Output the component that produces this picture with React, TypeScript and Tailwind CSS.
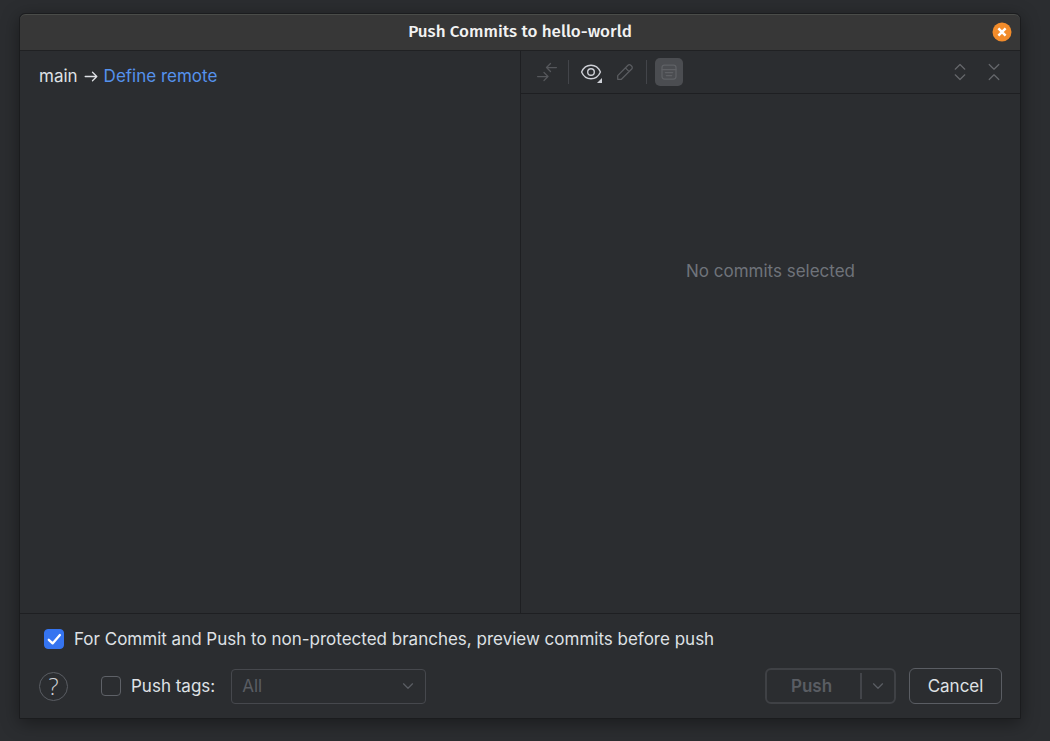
import { useState } from "react";

const iconButton = "flex h-7 w-7 items-center justify-center rounded";

function CompareIcon() {
  return (
    <svg width="20" height="20" viewBox="0 0 20 20" fill="none" stroke="#55575b" strokeWidth="1.25" strokeLinecap="round" strokeLinejoin="round" aria-hidden="true">
      <path d="M19.400 5.500H9.500M13.500 1.500l-4 4 4 4M0.600 14.500H11M7 10.500l4 4-4 4" />
    </svg>
  );
}

function EyeIcon() {
  return (
    <svg width="24" height="24" viewBox="0 0 24 24" fill="none" aria-hidden="true">
      <path d="M2.600 12C4.300 8 7.800 5.200 12 5.200s7.700 2.800 9.400 6.800c-1.700 4-5.200 6.800-9.400 6.800S4.300 16 2.600 12z" stroke="#ced0d6" strokeWidth="1.400" />
      <circle cx="12" cy="12" r="3.300" stroke="#ced0d6" strokeWidth="1.400" />
      <path d="M23 18v5h-5z" fill="#ced0d6" />
    </svg>
  );
}

function PencilIcon() {
  return (
    <svg width="20" height="20" viewBox="0 0 20 20" fill="none" stroke="#5a5c60" strokeWidth="1.25" strokeLinejoin="round" aria-hidden="true">
      <path d="M2.700 13.600L13 3.300a1.900 1.900 0 0 1 2.700 0l1 1a1.900 1.900 0 0 1 0 2.700L6.400 17.300H2.700zM10.400 5.900l3.700 3.700" />
    </svg>
  );
}

function PreviewIcon() {
  return (
    <svg width="20" height="20" viewBox="0 0 20 20" fill="none" stroke="#5f6165" strokeWidth="1.25" strokeLinecap="round" aria-hidden="true">
      <rect x="3" y="3" width="14" height="14" rx="2.500" />
      <path d="M3 7.500h14M6.300 10.600h7.400M7.300 13.600h5.400" />
    </svg>
  );
}

function ChevronDown() {
  return (
    <svg width="12" height="12" viewBox="0 0 12 12" fill="none" stroke="#5a5d63" strokeWidth="1.250" strokeLinecap="round" strokeLinejoin="round" aria-hidden="true">
      <path d="M1.500 3.800L6 8.300l4.500-4.500" />
    </svg>
  );
}

function Toolbar() {
  return (
    <div className="flex h-[43px] items-center border-b border-[#1e1f22] px-3">
      <button type="button" disabled aria-label="Show diff" className={iconButton}>
        <CompareIcon />
      </button>
      <div className="mr-2 ml-[7px] h-6 w-px bg-[#43454a]" />
      <button type="button" aria-label="View options" className={iconButton}>
        <EyeIcon />
      </button>
      <button type="button" disabled aria-label="Edit source" className="ml-1.5 flex h-7 w-7 items-center justify-center rounded">
        <PencilIcon />
      </button>
      <div className="mr-2 ml-[7px] h-6 w-px bg-[#43454a]" />
      <button type="button" disabled aria-label="Show details" className="flex h-7 w-7 items-center justify-center rounded-[5px] bg-[#4b4d51]">
        <PreviewIcon />
      </button>
      <div className="ml-auto flex gap-1.5">
        <button type="button" disabled aria-label="Expand all" className={iconButton}>
          <svg width="20" height="20" viewBox="0 0 20 20" fill="none" stroke="#66686c" strokeWidth="1.2" strokeLinecap="round" strokeLinejoin="round" aria-hidden="true">
            <path d="M5.200 7.200L10 2.500l4.800 4.700M5.200 12.800L10 17.500l4.800-4.700" />
          </svg>
        </button>
        <button type="button" disabled aria-label="Collapse all" className={iconButton}>
          <svg width="20" height="20" viewBox="0 0 20 20" fill="none" stroke="#66686c" strokeWidth="1.2" strokeLinecap="round" strokeLinejoin="round" aria-hidden="true">
            <path d="M5.200 2.500L10 7.200l4.800-4.700M5.200 17.500L10 12.800l4.800 4.700" />
          </svg>
        </button>
      </div>
    </div>
  );
}

function Checkbox({ id, checked, onChange }: { id: string; checked: boolean; onChange: (value: boolean) => void }) {
  return (
    <span className="grid h-5 w-5 shrink-0 place-items-center">
      <input
        id={id}
        type="checkbox"
        checked={checked}
        onChange={(e) => onChange(e.target.checked)}
        className="col-start-1 row-start-1 h-5 w-5 appearance-none rounded border border-[#5e6167] checked:border-[#3574f0] checked:bg-[#3574f0]"
      />
      {checked && (
        <svg width="20" height="20" viewBox="0 0 20 20" fill="none" className="pointer-events-none col-start-1 row-start-1" aria-hidden="true">
          <path d="M4.800 10.800l3.800 3.600 7.300-8.400" stroke="#fff" strokeWidth="2.300" strokeLinecap="round" strokeLinejoin="round" />
        </svg>
      )}
    </span>
  );
}

export default function App() {
  const [preview, setPreview] = useState(true);
  const [tags, setTags] = useState(false);

  return (
    <div className="flex min-h-screen bg-[#2b2d30] pt-[13px] pr-[29px] pb-[22px] pl-[19px] font-['Inter','Liberation_Sans',sans-serif] text-[17px] leading-5 text-[#dfe1e5]">
      <div className="flex flex-1 flex-col rounded-t-md border border-[#1b1c1e] bg-[#2b2d30] shadow-[0_4px_18px_rgba(0,0,0,0.4)]">
        <header className="grid h-[37px] grid-cols-[1fr_auto_1fr] items-center rounded-t-md border-t border-b border-t-[#4a4c49] border-b-[#202123] bg-[#373737] px-2 pb-px">
          <h1 className="col-start-2 font-['Fira_Sans','Open_Sans',sans-serif] text-[17px] leading-[22px] font-medium text-[#f2f2f2]">Push Commits to hello-world</h1>
          <button type="button" aria-label="Close" className="flex h-5 w-5 items-center justify-center justify-self-end">
            <svg width="20" height="20" viewBox="0 0 20 20" aria-hidden="true">
              <circle cx="10" cy="10" r="9.500" fill="#f28c2b" />
              <path d="M6.400 6.400l7.200 7.200M13.600 6.400l-7.200 7.200" stroke="#fff" strokeWidth="2.500" />
            </svg>
          </button>
        </header>

        <main className="grid flex-1 grid-cols-2">
          <section className="px-[19px] pt-[15px]">
            <p className="flex items-center gap-1.5">
              <span>main</span>
              <svg width="14" height="14" viewBox="0 0 14 14" fill="none" stroke="#dfe1e5" strokeWidth="1.300" strokeLinecap="round" strokeLinejoin="round" aria-hidden="true">
                <path d="M1.200 7.500H12.800M8.500 3.200l4.300 4.300-4.300 4.300" />
              </svg>
              <a href="#remote" className="text-[#5592ed]">Define remote</a>
            </p>
          </section>
          <section className="flex flex-col border-l border-[#1e1f22]">
            <Toolbar />
            <p className="mt-[167px] text-center text-[#6f737a]">No commits selected</p>
          </section>
        </main>

        <footer className="flex flex-col gap-[19px] border-t border-[#1e1f22] pt-[15px] pr-[18px] pb-3.5 pl-[19px]">
          <div className="flex items-center gap-2.5 pl-[5px]">
            <Checkbox id="preview" checked={preview} onChange={setPreview} />
            <label htmlFor="preview">For Commit and Push to non-protected branches, preview commits before push</label>
          </div>
          <div className="flex items-center">
            <button type="button" aria-label="Help" className="flex h-[29px] w-[29px] items-center justify-center rounded-full border border-[#5a5d63] font-['Open_Sans',sans-serif] text-2xl leading-5 font-light text-[#ced0d6]">
              ?
            </button>
            <div className="ml-[33px] flex items-center gap-2.5">
              <Checkbox id="tags" checked={tags} onChange={setTags} />
              <label htmlFor="tags">Push tags:</label>
            </div>
            <div className="ml-4 grid w-[195px] items-center">
              <select
                disabled
                aria-label="Which tags"
                className="col-start-1 row-start-1 h-[35px] appearance-none rounded border border-[#46484d] bg-transparent px-2.5 text-[#5a5d63] opacity-100"
              >
                <option>All</option>
              </select>
              <span className="pointer-events-none col-start-1 row-start-1 justify-self-end pr-3">
                <ChevronDown />
              </span>
            </div>
            <div className="ml-auto flex h-9 w-[131px] items-center rounded-md border-2 border-[#3f4145]">
              <button type="button" disabled className="flex-1 pr-1 font-semibold text-[#5a5d63]">Push</button>
              <div className="h-[26px] w-0.5 bg-[#43454a]" />
              <button type="button" disabled aria-label="Push options" className="flex h-8 w-8 items-center justify-center">
                <ChevronDown />
              </button>
            </div>
            <button type="button" className="ml-[13px] h-9 w-[93px] rounded-md border border-[#5a5d63]">Cancel</button>
          </div>
        </footer>
      </div>
    </div>
  );
}
